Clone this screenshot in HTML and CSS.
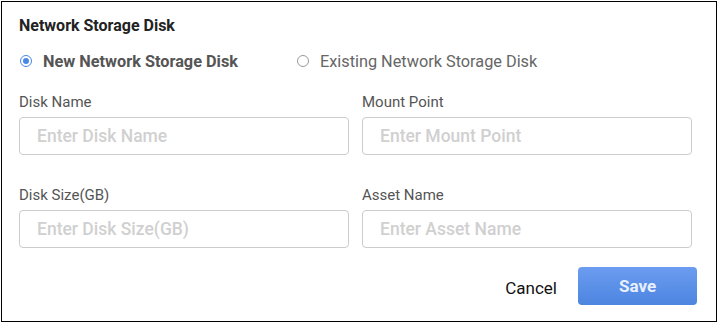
FILE: index.html
```html
<!DOCTYPE html>
<html lang="en">
<head>
    <meta charset="UTF-8">
    <title>Network Storage Disk</title>
    <link rel="stylesheet" href="styles.css">
</head>
<body>
    <div class="dialog">
        <div class="title">Network Storage Disk</div>

        <div class="radio-row">
            <label class="radio active">
                <span class="dot"></span>New Network Storage Disk
            </label>
            <label class="radio">
                <span class="dot"></span>Existing Network Storage Disk
            </label>
        </div>

        <div class="form-grid">
            <div class="field">
                <div class="label">Disk Name</div>
                <input type="text" placeholder="Enter Disk Name">
            </div>
            <div class="field">
                <div class="label">Mount Point</div>
                <input type="text" placeholder="Enter Mount Point">
            </div>
            <div class="field">
                <div class="label">Disk Size(GB)</div>
                <input type="text" placeholder="Enter Disk Size(GB)">
            </div>
            <div class="field">
                <div class="label">Asset Name</div>
                <input type="text" placeholder="Enter Asset Name">
            </div>
        </div>

        <div class="footer">
            <button class="btn-cancel">Cancel</button>
            <button class="btn-save">Save</button>
        </div>
    </div>
</body>
</html>
```

FILE: styles.css
```css
body {
    margin: 0;
    padding: 1px;
    background-color: #ffffff;
    font-family: Roboto, 'Liberation Sans', sans-serif;
    color: #555;
}

.dialog {
    width: 714px;
    height: 319px;
    border: 1px solid #000;
    box-sizing: content-box;
    display: flex;
    flex-direction: column;
}

.title {
    margin: 15px 0 0 17px;
    font-size: 16px;
    font-weight: 700;
    color: #222;
    line-height: 18px;
}

.radio-row {
    display: flex;
    align-items: center;
    margin: 16px 0 0 18px;
    height: 20px;
}

.radio {
    display: flex;
    align-items: center;
    font-size: 16.3px;
    color: #666;
    margin-right: 59px;
}

.radio.active {
    font-weight: 700;
    color: #555;
}

.dot {
    width: 12px;
    height: 12px;
    border: 1px solid #999;
    border-radius: 50%;
    box-sizing: border-box;
    margin-right: 11px;
    position: relative;
}

.radio.active .dot {
    border-color: #4a86e8;
}

.radio.active .dot::after {
    content: "";
    position: absolute;
    top: 2px;
    left: 2px;
    width: 6px;
    height: 6px;
    border-radius: 50%;
    background-color: #4a86e8;
}

.form-grid {
    display: grid;
    grid-template-columns: 330px 330px;
    column-gap: 13px;
    row-gap: 31px;
    margin: 22px 0 0 17px;
}

.label {
    font-size: 15px;
    line-height: 18px;
    color: #555;
    margin-bottom: 6px;
}

.field input {
    width: 100%;
    height: 38px;
    box-sizing: border-box;
    border: 1px solid #ccc;
    border-radius: 4px;
    padding: 0 17px;
    font-family: inherit;
    font-size: 17.5px;
    font-weight: 500;
    outline: none;
}

.field input::placeholder {
    color: #d0d0d0;
}

.footer {
    display: flex;
    justify-content: flex-end;
    align-items: center;
    margin: 19px 19px 0 0;
    gap: 21px;
}

.footer button {
    font-family: inherit;
    font-size: 17px;
    border: none;
    cursor: pointer;
}

.btn-cancel {
    background: none;
    color: #111;
    padding: 0;
    margin-top: 3px;
}

.btn-save {
    width: 119px;
    height: 38px;
    border-radius: 4px;
    background: linear-gradient(#6b9cf0, #4d85e0);
    color: #e8f0fd;
    font-weight: 700;
    padding-bottom: 2px;
}
```
